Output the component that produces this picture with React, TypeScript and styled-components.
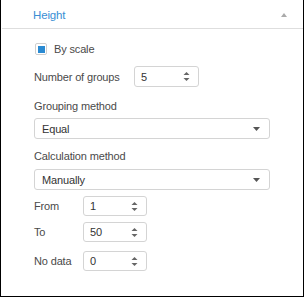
import React from "react";
import styled, { createGlobalStyle } from "styled-components";

const Global = createGlobalStyle`
  html, body { margin: 0; padding: 0; background: #fff; }
  body { font-family: "Liberation Sans", Arial, sans-serif; font-size: 11px; color: #444; letter-spacing: -0.15px; }
`;

const Panel = styled.div`
  box-sizing: border-box;
  width: 304px;
  height: 297px;
  border: 1px solid #000;
  border-top: none;
  background: #fff;
  display: flex;
  flex-direction: column;
`;

const Header = styled.div`
  margin-left: 1px;
  border-bottom: 1px solid #dedede;
  display: flex;
  align-items: center;
  justify-content: space-between;
  padding: 2px 16px 0 31px;
  height: 26px;
`;

const Title = styled.span`
  color: #3a8ed4;
  font-size: 11.5px;
`;

const Body = styled.div`
  display: flex;
  flex-direction: column;
  align-items: flex-start;
  padding-left: 33px;
`;

const Row = styled.div<{ $mt: number }>`
  display: flex;
  align-items: center;
  margin-top: ${(p) => p.$mt}px;
`;

const Label = styled.div<{ $w?: number; $mt?: number }>`
  width: ${(p) => (p.$w ? `${p.$w}px` : "auto")};
  margin-top: ${(p) => p.$mt ?? 0}px;
  line-height: 14px;
  color: #4a4a4a;
  white-space: nowrap;
`;

const Box = styled.span`
  box-sizing: border-box;
  width: 12px;
  height: 12px;
  margin-left: 1px;
  border: 1px solid #cfcfcf;
  border-radius: 2px;
  display: flex;
  align-items: center;
  justify-content: center;
`;

const BoxFill = styled.span`
  width: 7px;
  height: 7px;
  background: #2a8ad2;
`;

const CheckText = styled.span`
  margin-left: 7px;
  line-height: 12px;
  color: #4a4a4a;
`;

const Spin = styled.div<{ $w: number; $h: number }>`
  box-sizing: border-box;
  width: ${(p) => p.$w}px;
  height: ${(p) => p.$h}px;
  border: 1px solid #d4d4d4;
  border-radius: 3px;
  display: flex;
  align-items: center;
  justify-content: space-between;
  padding: 0 8px 0 6px;
  color: #333;
`;

const Select = styled.div<{ $mt: number }>`
  box-sizing: border-box;
  width: 236px;
  height: 21px;
  margin-top: ${(p) => p.$mt}px;
  border: 1px solid #d4d4d4;
  border-radius: 3px;
  display: flex;
  align-items: center;
  justify-content: space-between;
  padding: 0 9px 0 7px;
  color: #333;
`;

const SpinArrows = () => (
  <svg width="7" height="11" viewBox="0 0 7 11">
    <path d="M0.5 4 L3.5 1 L6.5 4 Z" fill="#666" />
    <path d="M0.5 7 L3.5 10 L6.5 7 Z" fill="#666" />
  </svg>
);

const DownArrow = () => (
  <svg width="7" height="4" viewBox="0 0 7 4">
    <path d="M0 0 L7 0 L3.5 4 Z" fill="#555" />
  </svg>
);

const UpCaret = () => (
  <svg width="6" height="4" viewBox="0 0 6 4">
    <path d="M0 4 L6 4 L3 0 Z" fill="#aaa" />
  </svg>
);

export default function App() {
  return (
    <>
      <Global />
      <Panel>
        <Header>
          <Title>Height</Title>
          <UpCaret />
        </Header>
        <Body>
          <Row $mt={14}>
            <Box>
              <BoxFill />
            </Box>
            <CheckText>By scale</CheckText>
          </Row>
          <Row $mt={11}>
            <Label $w={100}>Number of groups</Label>
            <Spin $w={65} $h={21}>
              <span>5</span>
              <SpinArrows />
            </Spin>
          </Row>
          <Label $mt={12}>Grouping method</Label>
          <Select $mt={5}>
            <span>Equal</span>
            <DownArrow />
          </Select>
          <Label $mt={10}>Calculation method</Label>
          <Select $mt={6}>
            <span>Manually</span>
            <DownArrow />
          </Select>
          <Row $mt={6}>
            <Label $w={49}>From</Label>
            <Spin $w={64} $h={20}>
              <span>1</span>
              <SpinArrows />
            </Spin>
          </Row>
          <Row $mt={6}>
            <Label $w={49}>To</Label>
            <Spin $w={64} $h={20}>
              <span>50</span>
              <SpinArrows />
            </Spin>
          </Row>
          <Row $mt={9}>
            <Label $w={49}>No data</Label>
            <Spin $w={64} $h={20}>
              <span>0</span>
              <SpinArrows />
            </Spin>
          </Row>
        </Body>
      </Panel>
    </>
  );
}
